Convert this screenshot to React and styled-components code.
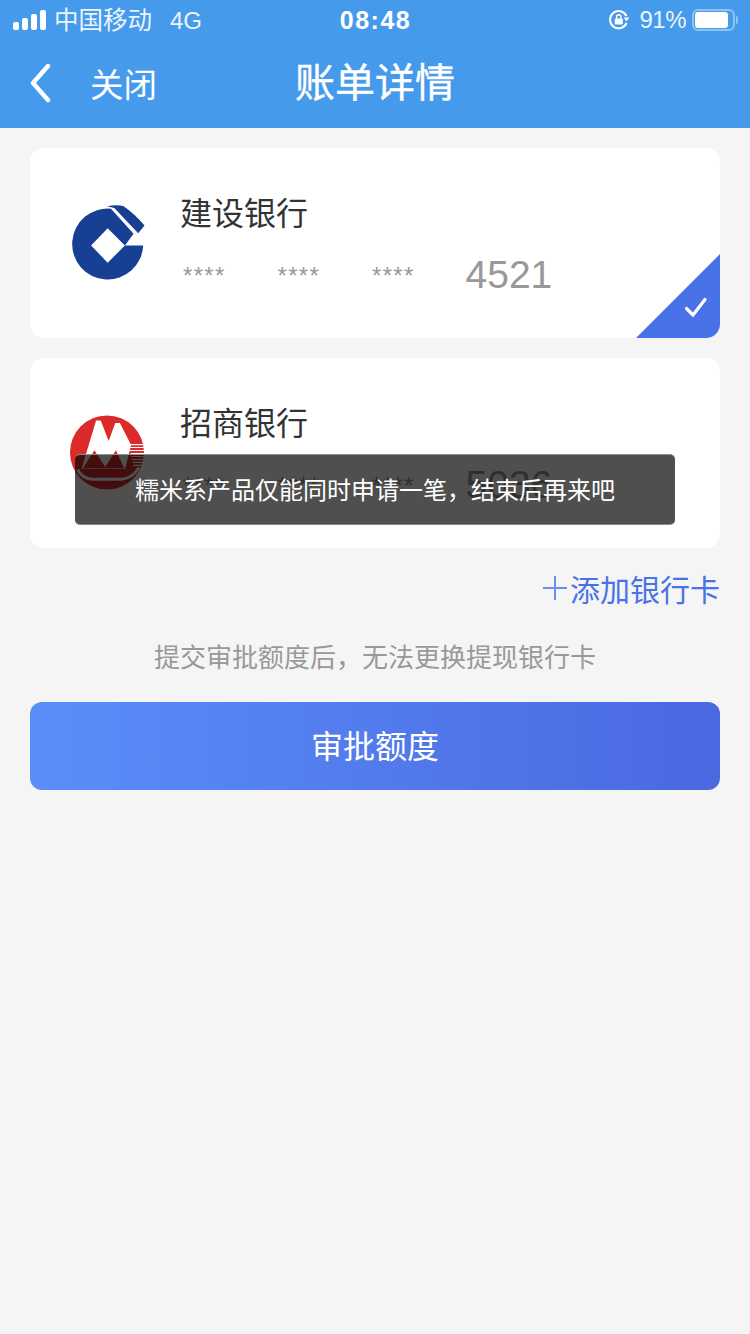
import styled, { createGlobalStyle } from "styled-components";

const cards = [
  { id: "ccb", name: "建设银行", tail: "4521", logo: <CcbLogo />, selected: true },
  { id: "cmb", name: "招商银行", tail: "5036", logo: <CmbLogo /> },
];

function CcbLogo() {
  return (
    <svg width="75" height="78" viewBox="60 40 225 235">
      <path
        fill="#173f94"
        fillRule="evenodd"
        d="M180 54 A107 107 0 1 0 277 165 L222 165 L248 130 Z M120 165 L170 113 L222 165 L170 217 Z"
      />
      <path fill="#173f94" d="M168 47 Q195 41 217 46 Q252 70 281 105 L262 128 L190 52 Z" />
    </svg>
  );
}

function CmbLogo() {
  return (
    <CmbMark width="75" height="75" viewBox="13 15 224 224">
      <circle cx="125" cy="127" r="112" fill="#dc2a2b" />
      <path fill="#fff" d="M48 176 L92 30 L106 30 L130 92 L150 38 L164 38 L198 104 L180 176 Z" />
      <path fill="#dc2a2b" d="M52 175 L87 120 L122 175 Z M117 175 L152 120 L177 175 Z" />
      <path
        stroke="#fff"
        strokeWidth="3.4"
        d="M190 103 H240 M192 112 H240 M194 121 H240 M196 130 H240 M198 139 H240 M200 148 H240 M202 157 H240 M204 166 H238"
      />
      <path fill="none" stroke="#fff" strokeWidth="9" d="M36 178 Q48 206 82 208 H170 Q204 204 222 172" />
    </CmbMark>
  );
}

const Signal = () => (
  <svg width="34" height="20" viewBox="0 0 34 20">
    <rect x="0" y="12" width="6" height="8" rx="2" fill="#fff" />
    <rect x="9" y="8" width="6" height="12" rx="2" fill="#fff" />
    <rect x="18" y="4" width="6" height="16" rx="2" fill="#fff" />
    <rect x="27" y="0" width="6" height="20" rx="2" fill="#fff" />
  </svg>
);

const RotationLock = () => (
  <svg width="22" height="22" viewBox="0 0 22 22">
    <path fill="none" stroke="#fff" strokeWidth="2" d="M18.6 14 A8.6 8.6 0 1 1 18.4 7" />
    <path fill="#fff" d="M15.6 8.6 L21.4 8.6 L18.5 12.6 Z" />
    <rect x="6.8" y="9.6" width="8" height="6" rx="1" fill="#fff" />
    <path fill="none" stroke="#fff" strokeWidth="1.4" d="M8.6 9.8 V8 A2.2 2.2 0 0 1 13 8 V9.8" />
  </svg>
);

const BackArrow = () => (
  <svg width="22" height="40" viewBox="0 0 22 40">
    <path fill="none" stroke="#fff" strokeWidth="4.4" strokeLinecap="round" strokeLinejoin="round" d="M18 3 L3 20 L18 37" />
  </svg>
);

const Tick = () => (
  <svg width="24" height="24" viewBox="0 0 24 24">
    <path fill="none" stroke="#fff" strokeWidth="3.2" strokeLinecap="round" strokeLinejoin="round" d="M2.5 12.5 L9 19 L21 3.5" />
  </svg>
);

const App = () => {
  return (
    <Page>
      <GlobalStyle />
      <Header>
        <StatusBar>
          <StatusGroup>
            <Signal />
            <Carrier>中国移动</Carrier>
            <Network>4G</Network>
          </StatusGroup>
          <Clock>08:48</Clock>
          <StatusGroup $end>
            <RotationLock />
            <Percent>91%</Percent>
            <Battery>
              <BatteryFill />
            </Battery>
            <BatteryNub />
          </StatusGroup>
        </StatusBar>
        <NavBar>
          <NavLeft>
            <BackArrow />
            <CloseLabel>关闭</CloseLabel>
          </NavLeft>
          <Title>账单详情</Title>
        </NavBar>
      </Header>

      <Content>
        <CardList>
          {cards.map((card) => (
            <Card key={card.id}>
              <LogoSlot>{card.logo}</LogoSlot>
              <CardInfo>
                <BankName>{card.name}</BankName>
                <CardNumber>
                  <Stars>****</Stars>
                  <Stars>****</Stars>
                  <Stars>****</Stars>
                  <Tail>{card.tail}</Tail>
                </CardNumber>
              </CardInfo>
              {card.selected && (
                <Corner>
                  <Tick />
                </Corner>
              )}
            </Card>
          ))}
          <Toast>糯米系产品仅能同时申请一笔，结束后再来吧</Toast>
        </CardList>

        <AddCard>
          <PlusMark />
          添加银行卡
        </AddCard>
        <Notice>提交审批额度后，无法更换提现银行卡</Notice>
        <SubmitButton>审批额度</SubmitButton>
      </Content>
    </Page>
  );
};

const GlobalStyle = createGlobalStyle`
  html, body {
    margin: 0;
    padding: 0;
    background: #f5f5f5;
  }
  * {
    box-sizing: border-box;
  }
`;

const Page = styled.div`
  width: 750px;
  height: 1334px;
  overflow: hidden;
  background: #f5f5f5;
  font-family: "Liberation Sans", "Noto Sans CJK SC", sans-serif;
`;

const Header = styled.header`
  height: 128px;
  background: #469aeb;
  color: #fff;
`;

const StatusBar = styled.div`
  height: 40px;
  padding: 0 12px 0 13px;
  display: grid;
  grid-template-columns: 1fr auto 1fr;
  align-items: center;
`;

const StatusGroup = styled.div`
  display: flex;
  align-items: center;
  justify-content: ${(props) => (props.$end ? "flex-end" : "flex-start")};
`;

const Carrier = styled.span`
  margin-left: 7px;
  padding-bottom: 4px;
  font-size: 24.5px;
  color: #eaf4fd;
`;

const Network = styled.span`
  margin-left: 18px;
  padding-top: 2px;
  font-size: 24px;
  color: #eaf4fd;
`;

const Clock = styled.span`
  font-size: 25px;
  font-weight: 700;
  letter-spacing: 1.5px;
`;

const Percent = styled.span`
  margin-left: 9px;
  font-size: 24px;
  letter-spacing: -0.5px;
  color: #eaf4fd;
`;

const Battery = styled.div`
  width: 43px;
  height: 22px;
  margin-left: 6px;
  padding: 1px;
  border: 2px solid rgba(255, 255, 255, 0.4);
  border-radius: 6px;
`;

const BatteryFill = styled.div`
  width: 33px;
  height: 100%;
  background: #fff;
  border-radius: 3px;
`;

const BatteryNub = styled.div`
  width: 2px;
  height: 8px;
  margin-left: 1px;
  background: rgba(255, 255, 255, 0.4);
  border-radius: 0 2px 2px 0;
`;

const NavBar = styled.div`
  height: 88px;
  padding: 0 30px 2px;
  display: grid;
  grid-template-columns: 1fr auto 1fr;
  align-items: center;
`;

const NavLeft = styled.div`
  display: flex;
  align-items: center;
  gap: 38px;
`;

const CloseLabel = styled.span`
  padding-bottom: 2px;
  font-size: 33.5px;
`;

const Title = styled.h1`
  margin: 0;
  font-size: 40px;
  font-weight: 400;
  line-height: 56px;
  -webkit-text-stroke: 0.4px #fff;
`;

const Content = styled.main`
  padding: 20px 30px;
`;

const CardList = styled.div`
  position: relative;
  display: flex;
  flex-direction: column;
  gap: 20px;
`;

const Card = styled.div`
  position: relative;
  height: 190px;
  padding-left: 40px;
  display: flex;
  align-items: center;
  overflow: hidden;
  background: #fff;
  border-radius: 14px;
`;

const LogoSlot = styled.div`
  width: 76px;
  display: flex;
  justify-content: center;
`;

const CmbMark = styled.svg`
  margin: -2px 2px 0 0;
`;

const CardInfo = styled.div`
  margin-left: 34px;
  padding-top: 6px;
`;

const BankName = styled.div`
  font-size: 32px;
  line-height: 44px;
  color: #333;
`;

const CardNumber = styled.div`
  margin-top: 14px;
  height: 50px;
  display: flex;
  align-items: center;
`;

const Stars = styled.span`
  width: 94.5px;
  padding: 2px 0 0 3px;
  font-size: 24px;
  letter-spacing: 1.3px;
  color: #999;
`;

const Tail = styled.span`
  margin-left: 2px;
  font-size: 39px;
  color: #999;
`;

const Corner = styled.div`
  position: absolute;
  right: 0;
  bottom: 0;
  width: 84px;
  height: 84px;
  background: #4a72e8;
  clip-path: polygon(100% 0, 100% 100%, 0 100%);
  svg {
    position: absolute;
    right: 12px;
    bottom: 18px;
  }
`;

const Toast = styled.div`
  position: absolute;
  top: 306px;
  left: 45px;
  width: 600px;
  height: 71px;
  padding-bottom: 3px;
  display: flex;
  align-items: center;
  justify-content: center;
  font-size: 24px;
  color: #fff;
  background: rgba(0, 0, 0, 0.69);
  border-top: 1px solid #8f8f8f;
  border-bottom: 1px solid #8a8a8a;
  border-radius: 5px;
`;

const AddCard = styled.div`
  margin-top: 18px;
  height: 44px;
  display: flex;
  align-items: center;
  justify-content: flex-end;
  font-size: 30px;
  color: #4a72e8;
`;

const PlusMark = styled.span`
  width: 24px;
  height: 24px;
  margin-right: 3px;
  background:
    linear-gradient(#6f8fee, #6f8fee) center / 100% 2px no-repeat,
    linear-gradient(#6f8fee, #6f8fee) center / 2px 100% no-repeat;
`;

const Notice = styled.p`
  margin: 28px 0 0;
  height: 40px;
  line-height: 40px;
  text-align: center;
  font-size: 26px;
  color: #999;
`;

const SubmitButton = styled.button`
  display: block;
  width: 100%;
  height: 88px;
  margin-top: 24px;
  padding: 0 0 4px;
  border: 0;
  border-radius: 12px;
  font-family: inherit;
  font-size: 32px;
  color: #fff;
  background: linear-gradient(90deg, #5b8ef9, #4a68e0);
`;

export default App;
